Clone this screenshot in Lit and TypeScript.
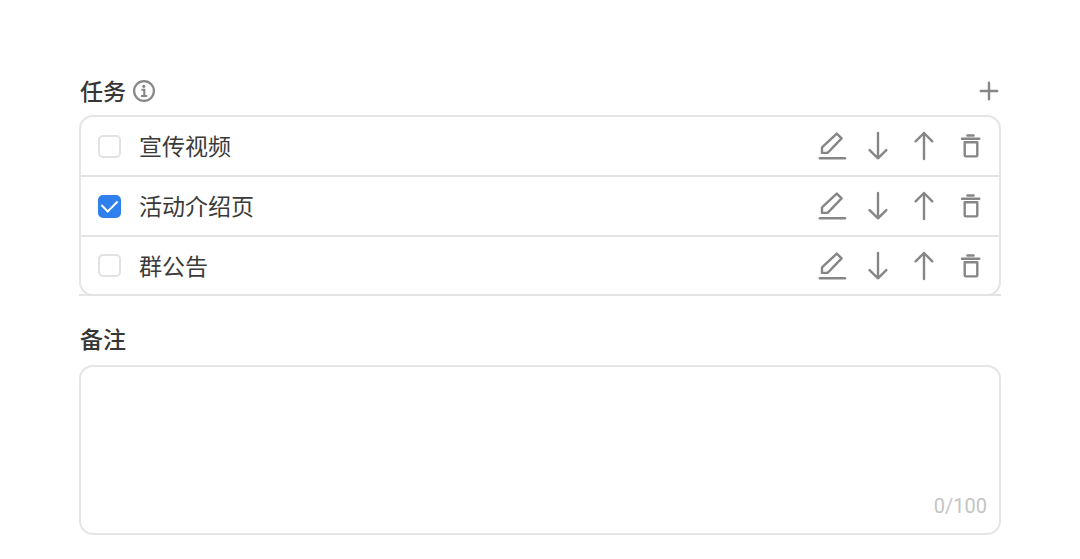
import { LitElement, html, css, svg } from "lit";
import { customElement, state } from "lit/decorators.js";

interface Task {
  id: string;
  name: string;
  done: boolean;
}

const glyphs = {
  edit: svg`<path d="M20.8 3.6 25.6 8.4 11.6 22.9H6V17.4Z"/><path d="M3.8 28.3H29"/>`,
  down: svg`<path d="M16 3V28.3M7.6 20.1 16 28.3 24.3 20.1"/>`,
  up: svg`<path d="M16 29V3M7.6 11.3 16 3 24.3 11.3"/>`,
  trash: svg`<path d="M13.4 5.5H19.6M8 8.8H25.3M10.7 12.2H23.3V25.2Q23.3 26.4 22.1 26.4H11.9Q10.7 26.4 10.7 25.2Z"/>`,
  plus: svg`<path d="M7.8 16H24.2M16 7.8V24.2"/>`,
};

const icon = (name: keyof typeof glyphs) => html`
  <svg class="icon" viewBox="0 0 32 32" aria-hidden="true">${glyphs[name]}</svg>
`;

@customElement("app-root")
export class AppRoot extends LitElement {
  static styles = css`
    :host {
      display: block;
      padding: 75px 79px 23px;
      background: #fff;
      color: #3a3a3a;
      font-family: "Noto Sans CJK SC", sans-serif;
      font-size: 23px;
      line-height: 32px;
    }
    * {
      box-sizing: border-box;
    }
    .head {
      display: flex;
      align-items: center;
      height: 32px;
      margin-bottom: 8px;
      padding: 0 1px;
    }
    .title,
    .name {
      padding-bottom: 2px;
    }
    .title {
      margin: 0;
      font-size: 23px;
      font-weight: 500;
      color: #363636;
    }
    .info {
      width: 24px;
      height: 24px;
      margin-left: 6px;
    }
    .add {
      margin-left: auto;
      margin-right: -5px;
    }
    button {
      display: block;
      flex: none;
      width: 32px;
      height: 32px;
      padding: 0;
      border: 0;
      background: none;
      color: #868686;
      cursor: pointer;
    }
    .icon {
      display: block;
      width: 32px;
      height: 32px;
      fill: none;
      stroke: currentColor;
      stroke-width: 2.4;
      stroke-linecap: round;
      stroke-linejoin: round;
    }
    .list {
      margin: 0 0 27px;
      padding: 0;
      list-style: none;
      border: 2px solid #e5e5e5;
      border-radius: 14px;
    }
    .row {
      display: flex;
      align-items: center;
      height: 60px;
      padding: 0 13px 0 17px;
      border-bottom: 2px solid #e4e4e4;
    }
    .row:last-child {
      height: 59px;
      margin: 0 -2px -2px;
      padding: 0 15px 0 19px;
    }
    .task {
      display: flex;
      align-items: center;
      gap: 18px;
      flex: 1;
    }
    .check {
      appearance: none;
      display: grid;
      place-items: center;
      width: 23px;
      height: 23px;
      margin: 0;
      border: 2px solid #e2e2e2;
      border-radius: 5px;
      background: #fff;
    }
    .check:checked {
      border-color: #2f80ed;
      background: #2f80ed;
    }
    .check:checked::before {
      content: "";
      width: 13px;
      height: 8px;
      margin-top: -4px;
      border: solid #fff;
      border-width: 0 0 2px 2px;
      transform: rotate(-45deg);
    }
    .actions {
      display: flex;
      gap: 14px;
    }
    .note-head {
      margin-bottom: 10px;
    }
    .note {
      position: relative;
      height: 170px;
    }
    .area {
      display: block;
      width: 100%;
      height: 100%;
      padding: 12px 16px;
      border: 2px solid #e5e5e5;
      border-radius: 14px;
      resize: none;
      outline: none;
      background: #fff;
      color: inherit;
      font: inherit;
    }
    .count {
      position: absolute;
      right: 14px;
      bottom: 17px;
      color: #c4c4c4;
      font: 400 20px/24px Roboto, sans-serif;
      pointer-events: none;
    }
  `;

  @state() private tasks: Task[] = [
    { id: "video", name: "宣传视频", done: false },
    { id: "intro", name: "活动介绍页", done: true },
    { id: "notice", name: "群公告", done: false },
  ];

  @state() private note = "";

  private toggle(id: string) {
    this.tasks = this.tasks.map((t) => (t.id === id ? { ...t, done: !t.done } : t));
  }

  private move(from: number, step: number) {
    const to = from + step;
    if (to < 0 || to >= this.tasks.length) return;
    const next = [...this.tasks];
    [next[from], next[to]] = [next[to], next[from]];
    this.tasks = next;
  }

  private remove(id: string) {
    this.tasks = this.tasks.filter((t) => t.id !== id);
  }

  render() {
    return html`
      <div class="head">
        <h2 class="title">任务</h2>
        <svg class="info" viewBox="0 0 24 24" aria-hidden="true">
          <circle cx="12" cy="12" r="9.9" fill="none" stroke="#868686" stroke-width="2.2" />
          <circle cx="11.8" cy="7.3" r="1.6" fill="#868686" />
          <path d="M9.4 10.8H12.3V17M9 17H15.2" fill="none" stroke="#868686" stroke-width="2.1" />
        </svg>
        <button class="add" type="button" aria-label="添加">${icon("plus")}</button>
      </div>
      <ul class="list">
        ${this.tasks.map(
          (t, i) => html`
            <li class="row">
              <label class="task">
                <input class="check" type="checkbox" .checked=${t.done} @change=${() => this.toggle(t.id)} />
                <span class="name">${t.name}</span>
              </label>
              <div class="actions">
                <button type="button" aria-label="编辑">${icon("edit")}</button>
                <button type="button" aria-label="下移" @click=${() => this.move(i, 1)}>${icon("down")}</button>
                <button type="button" aria-label="上移" @click=${() => this.move(i, -1)}>${icon("up")}</button>
                <button type="button" aria-label="删除" @click=${() => this.remove(t.id)}>${icon("trash")}</button>
              </div>
            </li>
          `
        )}
      </ul>
      <div class="head note-head">
        <label class="title" for="note">备注</label>
      </div>
      <div class="note">
        <textarea
          class="area"
          id="note"
          maxlength="100"
          .value=${this.note}
          @input=${(e: Event) => (this.note = (e.target as HTMLTextAreaElement).value)}
        ></textarea>
        <span class="count">${this.note.length}/100</span>
      </div>
    `;
  }
}
